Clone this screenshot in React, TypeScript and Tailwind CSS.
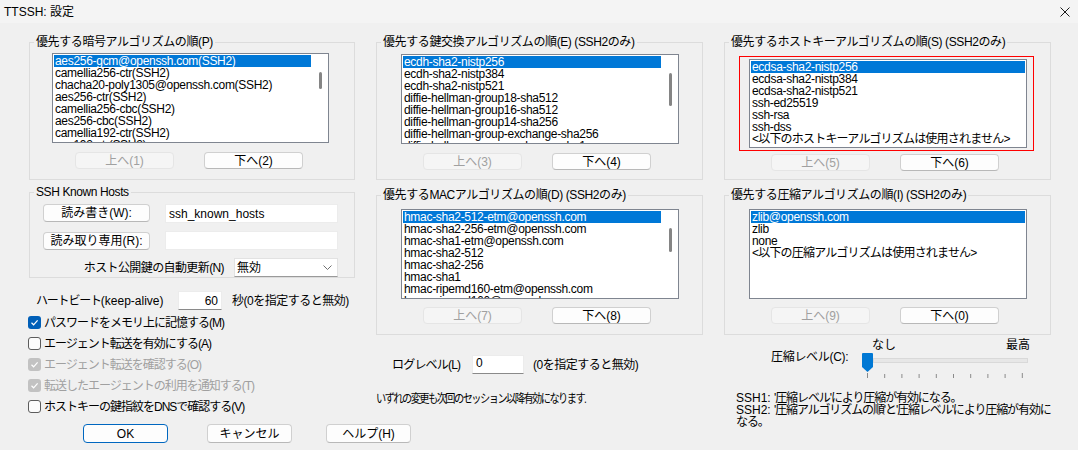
import React from 'react';

const font = "font-['Liberation_Sans','Noto_Sans_CJK_JP',sans-serif]";

function Btn({ label, disabled, primary, cls }: { label: string; disabled?: boolean; primary?: boolean; cls: string }) {
  const look = disabled
    ? 'border-[#e5e5e5] bg-[#f5f5f5] text-[#a0a0a0]'
    : primary
      ? 'border-[#0067c0] bg-[#fdfdfd] text-black'
      : 'border-[#d0d0d0] border-b-[#b8b8b8] bg-[#fdfdfd] text-black';
  return (
    <div className={`flex shrink-0 items-center justify-center rounded-[4px] border text-[12px] leading-[14px] ${look} ${cls}`}>
      {label}
    </div>
  );
}

function Group({ title, cls, children }: { title: string; cls: string; children: React.ReactNode }) {
  return (
    <fieldset className={`border border-[#dcdcdc] ${cls}`}>
      <legend className="ml-[4px] px-[2px] text-[12px] leading-[14px] tracking-[-0.4px] whitespace-nowrap">{title}</legend>
      {children}
    </fieldset>
  );
}

function ListBox({ items, thumb, cls }: { items: string[]; thumb?: string; cls: string }) {
  return (
    <div className={`relative overflow-hidden border border-[#7f8590] bg-white p-[1px] text-[12px] tracking-[-0.3px] ${cls}`}>
      {items.map((it, i) => (
        <div
          key={i}
          className={`h-[12px] whitespace-nowrap px-[1px] leading-[12px] ${thumb ? 'mr-[16px]' : ''} ${
            i === 0 ? 'bg-[#0078d7] text-white' : 'text-black'
          } ${it.startsWith('<') ? 'tracking-[-0.8px]' : ''}`}
        >
          {it}
        </div>
      ))}
      {thumb && <div className={`absolute right-[6px] w-[3px] rounded-full bg-[#858585] ${thumb}`} />}
    </div>
  );
}

function UpDown({ up, down, cls }: { up: string; down: string; cls: string }) {
  return (
    <div className={`flex gap-[30px] ${cls}`}>
      <Btn label={up} disabled cls="h-[17px] w-[99px]" />
      <Btn label={down} cls="h-[17px] w-[99px]" />
    </div>
  );
}

function Check({ label, state }: { label: string; state: 'on' | 'off' | 'dis' }) {
  return (
    <div className="flex h-[21px] items-center gap-[3px]">
      {state === 'off' ? (
        <div className="h-[13px] w-[13px] rounded-[3px] border border-[#5c5c5c] bg-[#fbfbfb]" />
      ) : (
        <div className={`flex h-[13px] w-[13px] items-center justify-center rounded-[3px] ${state === 'on' ? 'bg-[#005fb8]' : 'bg-[#c2c2c2]'}`}>
          <svg width="9" height="9" viewBox="0 0 9 9">
            <path d="M1.5 4.8 L3.6 6.8 L7.6 2.4" fill="none" stroke="#fff" strokeWidth="1.2" />
          </svg>
        </div>
      )}
      <span className={`text-[12px] leading-[14px] tracking-[-1px] ${state === 'dis' ? 'text-[#a0a0a0]' : 'text-black'}`}>{label}</span>
    </div>
  );
}

const ciphers = [
  'aes256-gcm@openssh.com(SSH2)',
  'camellia256-ctr(SSH2)',
  'chacha20-poly1305@openssh.com(SSH2)',
  'aes256-ctr(SSH2)',
  'camellia256-cbc(SSH2)',
  'aes256-cbc(SSH2)',
  'camellia192-ctr(SSH2)',
  'aes192-ctr(SSH2)',
];
const kex = [
  'ecdh-sha2-nistp256',
  'ecdh-sha2-nistp384',
  'ecdh-sha2-nistp521',
  'diffie-hellman-group18-sha512',
  'diffie-hellman-group16-sha512',
  'diffie-hellman-group14-sha256',
  'diffie-hellman-group-exchange-sha256',
  'diffie-hellman-group-exchange-sha1',
];
const hostKeys = [
  'ecdsa-sha2-nistp256',
  'ecdsa-sha2-nistp384',
  'ecdsa-sha2-nistp521',
  'ssh-ed25519',
  'ssh-rsa',
  'ssh-dss',
  '<以下のホストキーアルゴリズムは使用されません>',
];
const macs = [
  'hmac-sha2-512-etm@openssh.com',
  'hmac-sha2-256-etm@openssh.com',
  'hmac-sha1-etm@openssh.com',
  'hmac-sha2-512',
  'hmac-sha2-256',
  'hmac-sha1',
  'hmac-ripemd160-etm@openssh.com',
  'hmac-ripemd160@openssh.com',
];
const comps = ['zlib@openssh.com', 'zlib', 'none', '<以下の圧縮アルゴリズムは使用されません>'];

export default function App() {
  const ticks = Array.from({ length: 10 }, (_, i) => 5.5 + i * 17.2);
  return (
    <div className={`h-[450px] w-[1078px] overflow-hidden bg-[#f0f0f0] text-black ${font}`}>
      {/* Title bar */}
      <div className="flex h-[23px] items-center justify-between bg-[#f4f4f4] pl-[4px] pr-[8px] text-[12px] leading-[14px]">
        <span>TTSSH: 設定</span>
        <svg width="10" height="10" viewBox="0 0 10 10">
          <path d="M0.5 0.5 L9.5 9.5 M9.5 0.5 L0.5 9.5" stroke="#1a1a1a" strokeWidth="1" />
        </svg>
      </div>

      <div className="flex pl-[28px]">
        {/* Column 1 */}
        <div className="flex w-[327px] flex-col">
          <Group title="優先する暗号アルゴリズムの順(P)" cls="ml-[1px] mt-[12px] w-[326px] pb-[10px]">
            <ListBox items={ciphers} thumb="top-[18px] h-[17px]" cls="ml-[22px] mt-[4px] h-[90px] w-[277px]" />
            <UpDown up="上へ(1)" down="下へ(2)" cls="ml-[45px] mt-[9px]" />
          </Group>

          <Group title="SSH Known Hosts" cls="ml-[1px] mt-[5px] w-[326px] text-[12px]">
            <div className="mt-[5px] flex items-start">
              <Btn label="読み書き(W):" cls="ml-[13px] h-[18px] w-[107px]" />
              <div className="ml-[15px] flex h-[19px] w-[173px] items-center border border-[#ececec] bg-white px-[3px] leading-[14px]">
                ssh_known_hosts
              </div>
            </div>
            <div className="mt-[8px] flex h-[19px] items-center">
              <Btn label="読み取り専用(R):" cls="ml-[13px] h-[18px] w-[107px]" />
              <div className="ml-[15px] h-[19px] w-[173px] border border-[#ececec] bg-white" />
            </div>
            <div className="mt-[8px] flex h-[19px] items-center">
              <span className="w-[194px] text-right leading-[14px] tracking-[-0.6px]">ホスト公開鍵の自動更新(N)</span>
              <div className="ml-[10px] flex h-[19px] w-[104px] items-center justify-between border border-[#e2e2e2] border-b-[#9a9a9a] bg-white pl-[2px] pr-[5px] leading-[14px]">
                <span>無効</span>
                <svg width="9" height="5" viewBox="0 0 9 5">
                  <path d="M0.5 0.5 L4.5 4.5 L8.5 0.5" fill="none" stroke="#707070" strokeWidth="1" />
                </svg>
              </div>
            </div>
          </Group>

          <div className="mt-[13px] flex h-[19px] items-center text-[12px] leading-[14px]">
            <span className="ml-[8px] w-[142px]">
              <span className="tracking-[-1.2px]">ハートビート</span>(keep-alive)
            </span>
            <div className="flex h-[19px] w-[44px] items-center justify-end border border-[#ececec] border-b-[#8a8a8a] bg-white pr-[3px]">
              60
            </div>
            <span className="ml-[10px] tracking-[-0.5px]">秒(0を指定すると無効)</span>
          </div>

          <div className="mt-[2px] flex flex-col">
            <Check label="パスワードをメモリ上に記憶する(M)" state="on" />
            <Check label="エージェント転送を有効にする(A)" state="off" />
            <Check label="エージェント転送を確認する(O)" state="dis" />
            <Check label="転送したエージェントの利用を通知する(T)" state="dis" />
            <Check label="ホストキーの鍵指紋をDNSで確認する(V)" state="off" />
          </div>

          <div className="mt-[7px] flex">
            <Btn label="OK" primary cls="ml-[55px] h-[19px] w-[85px]" />
            <Btn label="キャンセル" cls="ml-[39px] h-[19px] w-[85px]" />
            <Btn label="ヘルプ(H)" cls="ml-[34px] h-[19px] w-[85px]" />
          </div>
        </div>

        {/* Column 2 */}
        <div className="ml-[21px] flex w-[328px] flex-col">
          <Group title="優先する鍵交換アルゴリズムの順(E) (SSH2のみ)" cls="mt-[12px] w-[327px] pb-[9px]">
            <ListBox items={kex} thumb="top-[18px] h-[33px]" cls="ml-[24px] mt-[5px] h-[90px] w-[278px]" />
            <UpDown up="上へ(3)" down="下へ(4)" cls="ml-[46px] mt-[9px]" />
          </Group>

          <Group title="優先するMACアルゴリズムの順(D) (SSH2のみ)" cls="mt-[8px] w-[327px] pb-[10px]">
            <ListBox items={macs} thumb="top-[18px] h-[24px]" cls="ml-[24px] mt-[7px] h-[90px] w-[278px]" />
            <UpDown up="上へ(7)" down="下へ(8)" cls="ml-[46px] mt-[8px]" />
          </Group>

          <div className="mt-[20px] flex h-[19px] items-center text-[12px] leading-[14px]">
            <span className="ml-[16px] w-[80px] tracking-[-0.8px]">ログレベル(L)</span>
            <div className="h-[19px] w-[52px] border border-[#ececec] border-b-[#8a8a8a] bg-white pl-[3px] leading-[14px]">0</div>
            <span className="ml-[9px] tracking-[-0.5px]">(0を指定すると無効)</span>
          </div>

          <div className="mt-[19px] whitespace-nowrap text-[12px] leading-[12px]">
            <span className="inline-block origin-left scale-x-[0.85] tracking-[-1.8px]">
              いずれの変更も次回のセッション以降有効になります.
            </span>
          </div>
        </div>

        {/* Column 3 */}
        <div className="ml-[20px] flex w-[328px] flex-col">
          <Group title="優先するホストキーアルゴリズムの順(S) (SSH2のみ)" cls="mt-[12px] w-[327px] pb-[8px]">
            <div className="ml-[14px] mt-[7px] w-[295px] border border-[#ff0000] pb-[2px] pl-[9px] pr-[6px] pt-[2px]">
              <ListBox items={hostKeys} cls="h-[89px] w-[278px]" />
            </div>
            <UpDown up="上へ(5)" down="下へ(6)" cls="ml-[46px] mt-[3px]" />
          </Group>

          <Group title="優先する圧縮アルゴリズムの順(I) (SSH2のみ)" cls="mt-[8px] w-[327px] pb-[10px]">
            <ListBox items={comps} cls="ml-[24px] mt-[7px] h-[90px] w-[278px]" />
            <UpDown up="上へ(9)" down="下へ(0)" cls="ml-[46px] mt-[8px]" />
          </Group>

          <div className="mt-[4px] flex text-[12px] leading-[12px]">
            <div className="ml-[47px] w-[91px] pt-[12px] tracking-[-0.3px]">圧縮レベル(C):</div>
            <div className="flex w-[167px] flex-col">
              <div className="flex h-[12px]">
                <span className="ml-[10px]">なし</span>
                <span className="ml-auto mr-[-1px]">最高</span>
              </div>
              <div className="relative mt-[2px] h-[19px]">
                <div className="absolute left-[11px] right-[1px] top-[5px] h-[5px] border border-[#d9d9d9] bg-[#e7e7e7]" />
                <svg className="absolute left-0 top-0" width="11" height="19" viewBox="0 0 11 19">
                  <path d="M1 0 H10 Q11 0 11 1 V14 L5.5 19 L0 14 V1 Q0 0 1 0 Z" fill="#0078d4" />
                </svg>
              </div>
              <svg className="mt-[1px]" width="167" height="5" viewBox="0 0 167 5">
                {ticks.map((x, i) => (
                  <line
                    key={i}
                    x1={x}
                    x2={x}
                    y1={i === 0 || i === 9 ? 0 : 1}
                    y2={5}
                    stroke="#8a8a8a"
                    strokeWidth="1"
                  />
                ))}
              </svg>
            </div>
          </div>

          <div className="ml-[12px] mt-[14px] whitespace-nowrap text-[12px] leading-[12px] tracking-[-1.1px]">
            <div>
              <span className="tracking-normal">SSH1: </span>'圧縮レベル'により圧縮が有効になる。
            </div>
            <div>
              <span className="tracking-normal">SSH2: </span>'圧縮アルゴリズムの順'と'圧縮レベル'により圧縮が有効に
            </div>
            <div>なる。</div>
          </div>
        </div>
      </div>
    </div>
  );
}
